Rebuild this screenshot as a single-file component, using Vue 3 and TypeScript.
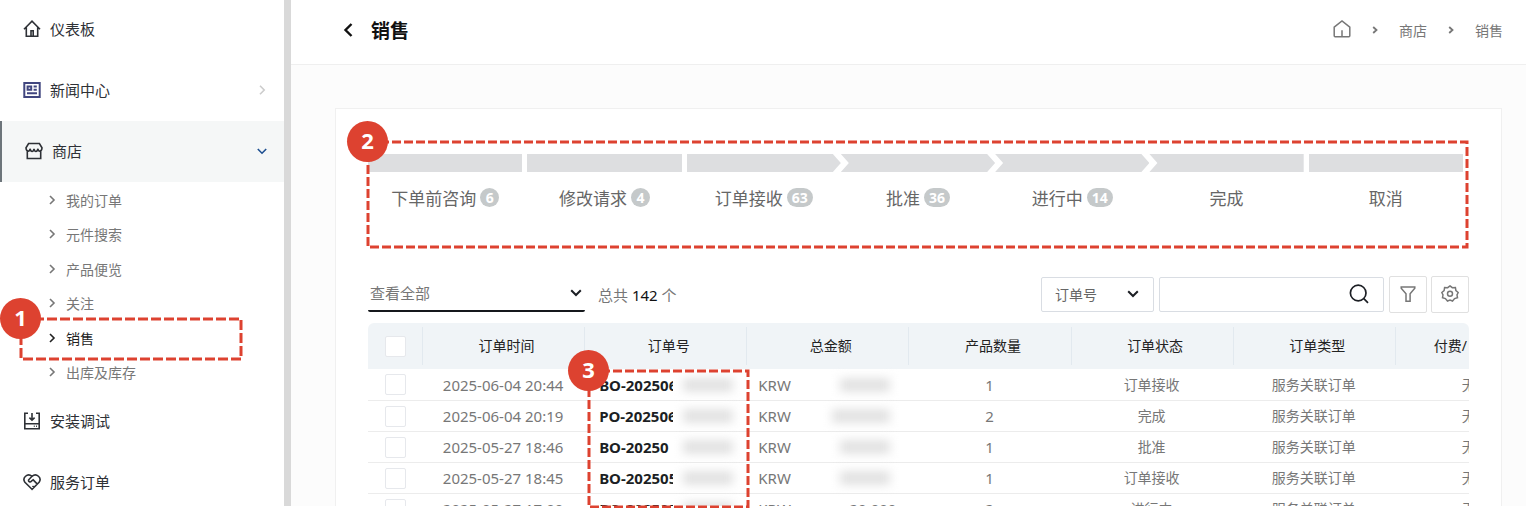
<script setup lang="ts">
import { ref } from 'vue'

interface Step {
  label: string
  count?: number
  shape: 'flat' | 'start' | 'middle' | 'end'
  spaced: boolean
}

interface Order {
  time: string
  no: string
  amount?: string
  wide?: boolean
  qty: number
  status: string
  type: string
  fee: string
}

const subItems = ['我的订单', '元件搜索', '产品便览', '关注', '销售', '出库及库存']
const current = '销售'

const steps: Step[] = [
  { label: '下单前咨询', count: 6, shape: 'flat', spaced: false },
  { label: '修改请求', count: 4, shape: 'flat', spaced: true },
  { label: '订单接收', count: 63, shape: 'start', spaced: true },
  { label: '批准', count: 36, shape: 'middle', spaced: false },
  { label: '进行中', count: 14, shape: 'middle', spaced: false },
  { label: '完成', shape: 'end', spaced: false },
  { label: '取消', shape: 'flat', spaced: true },
]

const columns = ['订单时间', '订单号', '总金额', '产品数量', '订单状态', '订单类型']

const orders: Order[] = [
  { time: '2025-06-04 20:44', no: 'BO-202506', qty: 1, status: '订单接收', type: '服务关联订单', fee: '无' },
  { time: '2025-06-04 20:19', no: 'PO-202506', wide: true, qty: 2, status: '完成', type: '服务关联订单', fee: '无' },
  { time: '2025-05-27 18:46', no: 'BO-20250', qty: 1, status: '批准', type: '服务关联订单', fee: '无' },
  { time: '2025-05-27 18:45', no: 'BO-202505', qty: 1, status: '订单接收', type: '服务关联订单', fee: '无' },
  { time: '2025-05-27 17:00', no: 'BO-202505', amount: '20,000', qty: 2, status: '进行中', type: '服务关联订单', fee: '无' },
]

const scope = ref('查看全部')
const field = ref('订单号')
const keyword = ref('')
</script>

<template>
  <div class="page">
    <aside class="sidebar">
      <nav class="nav" aria-label="主菜单">
        <a class="item" href="#">
          <svg class="icon" viewBox="0 0 18 18"><path d="M1 9.2 9 1.2l8 8M3.3 7.5v8.8h11.4V7.5M8 16v-5.200h2.200V16" /></svg>
          <span>仪表板</span>
        </a>
        <a class="item" href="#">
          <svg class="icon news" viewBox="0 0 18 18"><path d="M1.300 2h15.400v14H1.300zM4.600 5.600h3.600v3.200H4.600zM10.600 5.600h3.200M10.600 8.800h3.200M4 12.200h10" /></svg>
          <span>新闻中心</span>
          <svg class="arrow faint" viewBox="0 0 10 10"><path d="M3 .8 7.200 5 3 9.200" /></svg>
        </a>
        <a class="item open" href="#">
          <svg class="icon" viewBox="0 0 18 18"><path d="M3.600 1.500h10.800L17 5.800c0 4-4 4.400-4 1-1 3.600-3.200 3.600-4 0-.8 3.600-3 3.600-4 0 0 3.400-4 3-4-1zM2.300 9v7.500h13.400V9" /></svg>
          <span>商店</span>
          <svg class="arrow blue" viewBox="0 0 10 10"><path d="M.8 3 5 7.200 9.200 3" /></svg>
        </a>
        <ul class="sub">
          <li v-for="name in subItems" :key="name" :class="{ current: name === current }">
            <a href="#">
              <svg class="tick" viewBox="0 0 10 10"><path d="M3 1 7 5 3 9" /></svg>
              <span>{{ name }}</span>
            </a>
            <div v-if="name === current" class="mark mark-nav">
              <svg><rect width="100%" height="100%" /></svg>
              <span class="mark-no">1</span>
            </div>
          </li>
        </ul>
        <a class="item" href="#">
          <svg class="icon" viewBox="0 0 18 18"><path d="M5 1.300H1.800v15.400h14.400V1.300H13M1.800 11.800h14.400M9 1v7M6.400 5.600 9 8.200l2.600-2.600M10.800 14.300h.9M13 14.300h.9" /></svg>
          <span>安装调试</span>
        </a>
        <a class="item" href="#">
          <svg class="icon" viewBox="0 0 18 18"><path d="M9 16.300 1.900 9.200C-1.100 5.200 4.300-.6 9 3.300c4.700-3.900 10.100 1.900 7.100 5.900zM9 3.300 5.700 6.800c-.7 2 1.500 2.800 2.700 1.400l1.800-1.300 3.900 4M9.500 13l1.500 1.300" /></svg>
          <span>服务订单</span>
        </a>
      </nav>
    </aside>

    <div class="main">
      <header class="top">
        <button class="back" type="button" aria-label="返回">
          <svg viewBox="0 0 10 16"><path d="M8.500 2 2.500 8l6 6" /></svg>
        </button>
        <h1>销售</h1>
        <nav class="crumbs" aria-label="当前位置">
          <a href="#" aria-label="首页">
            <svg class="home" viewBox="0 0 18 18"><path d="M1.200 7.200 9 1l7.800 6.200v8.600q0 .9-.9.900H2.100q-.9 0-.9-.9zM9 10.200v6.500" /></svg>
          </a>
          <svg class="sep" viewBox="0 0 6 8"><path d="M1.200 1 4.500 4 1.200 7" /></svg>
          <a href="#">商店</a>
          <svg class="sep" viewBox="0 0 6 8"><path d="M1.200 1 4.500 4 1.200 7" /></svg>
          <a href="#">销售</a>
        </nav>
      </header>

      <section class="card">
        <div class="steps">
          <button v-for="s in steps" :key="s.label" type="button" class="step" :class="{ spaced: s.spaced }">
            <span class="bar" :class="s.shape"></span>
            <span class="caption">
              {{ s.label }}<span v-if="s.count" class="count">{{ s.count }}</span>
            </span>
          </button>
          <div class="mark mark-steps">
            <svg><rect width="100%" height="100%" /></svg>
            <span class="mark-no">2</span>
          </div>
        </div>

        <div class="tools">
          <label class="scope">
            <select v-model="scope" aria-label="查看范围"><option>查看全部</option></select>
            <svg class="caret" viewBox="0 0 12 8"><path d="M1.200 1.200 6 6l4.800-4.800" /></svg>
          </label>
          <p class="total">总共 <b>142</b> 个</p>
          <label class="field">
            <select v-model="field" aria-label="搜索字段"><option>订单号</option></select>
            <svg class="caret" viewBox="0 0 12 8"><path d="M1.200 1.200 6 6l4.800-4.800" /></svg>
          </label>
          <form class="search" @submit.prevent>
            <input v-model="keyword" type="text" aria-label="搜索关键词" />
            <button type="submit" aria-label="搜索">
              <svg viewBox="0 0 20 20"><circle cx="9.200" cy="9" r="7.800" /><path d="m14.800 14.600 4.200 4.200" /></svg>
            </button>
          </form>
          <button class="square" type="button" aria-label="筛选">
            <svg viewBox="0 0 18 18"><path d="M2.200 2h13.600v1.300l-4.700 5.500v7.400H7V8.800L2.200 3.300z" /></svg>
          </button>
          <button class="square" type="button" aria-label="设置">
            <svg viewBox="0 0 18 18"><path d="m9 .9 2.300 1.800 3.100-.2.500 3 2.300 2-1.200 2.300.5 2.900-2.900.9L11.500 16 9 15.100 6.500 16l-2.100-2.400-2.900-.9.500-2.900L.8 7.500l2.300-2 .5-3 3.100.2z" /><circle cx="9" cy="8.700" r="2.500" /></svg>
          </button>
        </div>

        <div class="list">
          <div class="clip">
            <table>
              <thead>
                <tr>
                  <th class="pick" scope="col"><input type="checkbox" aria-label="全选" /></th>
                  <th v-for="c in columns" :key="c" scope="col"><span>{{ c }}</span></th>
                  <th class="fee" scope="col"><span>付费/</span></th>
                </tr>
              </thead>
              <tbody>
                <tr v-for="o in orders" :key="o.time">
                  <td class="pick"><input type="checkbox" :aria-label="'选择 ' + o.time" /></td>
                  <td class="num">{{ o.time }}</td>
                  <td>
                    <div class="order"><a href="#">{{ o.no }}</a><i class="veil"></i></div>
                  </td>
                  <td>
                    <div class="money">
                      <span>KRW</span>
                      <span v-if="o.amount">{{ o.amount }}</span>
                      <i v-else class="veil" :class="{ wide: o.wide }"></i>
                    </div>
                  </td>
                  <td class="num">{{ o.qty }}</td>
                  <td>{{ o.status }}</td>
                  <td>{{ o.type }}</td>
                  <td class="fee">{{ o.fee }}</td>
                </tr>
              </tbody>
            </table>
          </div>
          <div class="mark mark-orders">
            <svg><rect width="100%" height="100%" /></svg>
            <span class="mark-no">3</span>
          </div>
        </div>
      </section>
    </div>
  </div>
</template>

<style>
body {
  margin: 0;
  background: #fff;
}
</style>

<style scoped>
.page,
.page * {
  box-sizing: border-box;
}
.page {
  display: flex;
  height: 100vh;
  padding-bottom: 2px;
  overflow: hidden;
  background: #fff;
  color: #777;
  font-family: "Noto Sans", "Noto Sans CJK SC", sans-serif;
  font-size: 14px;
}
a {
  color: inherit;
  text-decoration: none;
}
button,
input,
select {
  margin: 0;
  padding: 0;
  border: 0;
  background: none;
  color: inherit;
  font: inherit;
}
svg {
  display: block;
  flex: none;
  fill: none;
  stroke: currentColor;
}

/* Sidebar */
.sidebar {
  flex: none;
  width: 291px;
  border-right: 7px solid #d9d9d9;
  background: #fff;
}
.nav {
  margin-top: -1px;
}
.item {
  display: flex;
  align-items: center;
  gap: 9px;
  height: 61px;
  padding: 0 17px 2px 23px;
  color: #2e3136;
  font-size: 15px;
}
.item.open {
  border-left: 2px solid #6d757b;
  background: #f5f7f7;
}
.icon {
  width: 18px;
  height: 18px;
  stroke-width: 1.6;
}
.icon.news {
  color: #41467f;
  stroke-width: 2;
}
.arrow {
  width: 10px;
  height: 10px;
  margin-left: auto;
  stroke-width: 1.6;
}
.arrow.faint {
  color: #ccc;
}
.arrow.blue {
  color: #1d4f91;
}
.sub {
  display: flex;
  flex-direction: column;
  height: 209px;
  margin: 0;
  padding: 1px 0;
  list-style: none;
}
.sub li {
  position: relative;
  flex: 1;
}
.sub a {
  display: flex;
  align-items: center;
  gap: 9px;
  height: 100%;
  padding: 0 0 1px 47px;
}
.sub .current > a {
  color: #222;
}
.tick {
  width: 10px;
  height: 10px;
  stroke-width: 1.6;
}

/* Header */
.main {
  display: flex;
  flex: 1;
  flex-direction: column;
  min-width: 0;
  background: #fcfcfc;
}
.top {
  display: flex;
  flex: none;
  align-items: center;
  height: 65px;
  padding: 0 23px 5px 52px;
  border-bottom: 1px solid #efefef;
  background: #fff;
}
.back {
  color: #111;
  cursor: pointer;
}
.back svg {
  width: 10px;
  height: 16px;
  stroke-width: 2.4;
}
h1 {
  margin: 0 0 0 18px;
  color: #111;
  font-size: 19px;
  font-weight: 700;
}
.crumbs {
  display: flex;
  align-items: center;
  gap: 21px;
  margin-left: auto;
}
.home {
  width: 18px;
  height: 18px;
  margin-bottom: 2px;
  stroke-width: 1.5;
}
.sep {
  width: 6px;
  height: 8px;
  stroke-width: 1.8;
}

/* Card */
.card {
  display: flex;
  flex: 1;
  flex-direction: column;
  min-height: 0;
  margin: 43px 24px 0 44px;
  padding: 45px 32px 0;
  border: 1px solid #f0f0f0;
  border-bottom: 0;
  background: #fff;
}
.steps {
  position: relative;
  display: flex;
  flex: none;
  height: 94px;
  padding-right: 6px;
}
.step {
  display: flex;
  flex: 1 1 0;
  flex-direction: column;
  gap: 12px;
  color: #666;
  cursor: pointer;
}
.step.spaced {
  margin-left: 5px;
}
.bar {
  align-self: stretch;
  height: 18px;
  background: #dddee0;
}
.bar.start {
  clip-path: polygon(0 0, calc(100% - 8px) 0, 100% 50%, calc(100% - 8px) 100%, 0 100%);
}
.bar.middle {
  clip-path: polygon(0 0, calc(100% - 8px) 0, 100% 50%, calc(100% - 8px) 100%, 0 100%, 8px 50%);
}
.bar.end {
  clip-path: polygon(0 0, 100% 0, 100% 100%, 0 100%, 8px 50%);
}
.caption {
  display: flex;
  align-self: center;
  align-items: center;
  gap: 4px;
  height: 26px;
  font-size: 17px;
  white-space: nowrap;
}
.count {
  min-width: 19px;
  height: 19px;
  padding: 0 5px;
  border-radius: 10px;
  background: #c5c9ca;
  color: #fff;
  font-size: 14px;
  font-weight: 700;
  line-height: 19px;
}

/* Toolbar */
.tools {
  display: flex;
  flex: none;
  align-items: center;
  height: 36px;
  margin-top: 28px;
}
.scope,
.field {
  position: relative;
  display: block;
}
.scope select,
.field select {
  width: 100%;
  height: 100%;
  appearance: none;
  outline: 0;
}
.scope {
  width: 217px;
  height: 36px;
  border-bottom: 2px solid #15181c;
  border-radius: 2px;
  font-size: 15px;
}
.scope select {
  padding-left: 2px;
}
.caret {
  position: absolute;
  top: 50%;
  right: 3px;
  width: 12px;
  height: 8px;
  margin-top: -4px;
  color: #1c1f24;
  stroke-width: 2;
  pointer-events: none;
}
.field .caret {
  right: 14px;
}
.total {
  margin: 0 auto 0 13px;
  font-size: 15px;
}
.total b {
  color: #111;
  font-weight: 400;
}
.field {
  width: 113px;
  height: 35px;
  border: 1px solid #d9dde3;
  border-radius: 2px;
  color: #666;
}
.field select {
  padding-left: 13px;
}
.search {
  display: flex;
  align-items: center;
  width: 225px;
  height: 35px;
  margin: 0 5px;
  padding-right: 14px;
  border: 1px solid #d9dde3;
  border-radius: 2px;
}
.search input {
  flex: 1;
  min-width: 0;
  height: 100%;
  padding: 0 10px;
  outline: 0;
}
.search svg {
  width: 20px;
  height: 20px;
  color: #1c1f24;
  stroke-width: 1.7;
}
.square {
  display: grid;
  place-items: center;
  width: 38px;
  height: 37px;
  border: 1px solid #e0e0e0;
  border-radius: 2px;
}
.square + .square {
  margin-left: 4px;
}
.square svg {
  width: 18px;
  height: 18px;
  stroke-width: 1.5;
}

/* Order table */
.list {
  position: relative;
  flex: 1;
  min-height: 0;
  margin-top: 11px;
}
.clip {
  height: 100%;
  overflow: hidden;
  border-radius: 6px 6px 0 0;
}
table {
  width: 108%;
  border-collapse: separate;
  border-spacing: 0;
  table-layout: fixed;
}
th {
  height: 46px;
  padding: 4px 0;
  background: #f0f4f7;
  color: #222;
  font-weight: 400;
}
th span {
  display: block;
  padding-left: 6px;
  border-left: 1px solid #e2e9ef;
  line-height: 38px;
}
td {
  height: 31px;
  padding: 0;
  border-bottom: 1px solid #ececec;
  line-height: 20px;
  text-align: center;
  white-space: nowrap;
}
tbody tr:first-child td {
  height: 32px;
}
.pick {
  width: 54px;
  text-align: center;
}
.pick input {
  display: block;
  width: 21px;
  height: 21px;
  margin: 0 auto;
  border: 1px solid #e6e8ec;
  border-radius: 2px;
  background: #fff;
  appearance: none;
}
.num,
.order,
.money {
  font-size: 15px;
}
.order,
.money {
  display: flex;
  align-items: center;
}
.order {
  padding-left: 15px;
}
.order a {
  width: 74px;
  overflow: hidden;
  color: #1c1f24;
  font-weight: 700;
  text-align: left;
}
.money {
  justify-content: space-between;
  padding: 0 12px;
}
.veil {
  width: 50px;
  height: 14px;
  margin: 0 6px 0 10px;
  background: #e2e2e2;
  filter: blur(5px);
}
.veil.wide {
  width: 58px;
}
th.fee,
td.fee {
  text-align: left;
}
th.fee span {
  padding-left: 38px;
}
td.fee {
  padding-left: 67px;
}

/* Numbered callouts */
.mark {
  position: absolute;
  z-index: 2;
  padding: 1px;
  pointer-events: none;
}
.mark svg {
  width: 100%;
  height: 100%;
  overflow: visible;
  color: #dd4230;
  stroke-dasharray: 9 3;
  stroke-width: 3;
}
.mark-no {
  position: absolute;
  top: -20px;
  left: -20px;
  width: 41px;
  height: 41px;
  border-radius: 50%;
  background: #dd4230;
  color: #fff;
  font-size: 22px;
  font-weight: 700;
  line-height: 38px;
  text-align: center;
}
.mark-nav {
  top: -3px;
  left: 20px;
  width: 222px;
  height: 42px;
}
.mark-nav svg {
  stroke-dasharray: 10 3;
}
.mark-steps {
  top: -13px;
  right: 1px;
  bottom: 0;
  left: -1px;
}
.mark-orders {
  top: 47px;
  bottom: -2px;
  left: calc(54px + (108% - 54px) / 7 + 4px);
  width: 161px;
}
</style>
